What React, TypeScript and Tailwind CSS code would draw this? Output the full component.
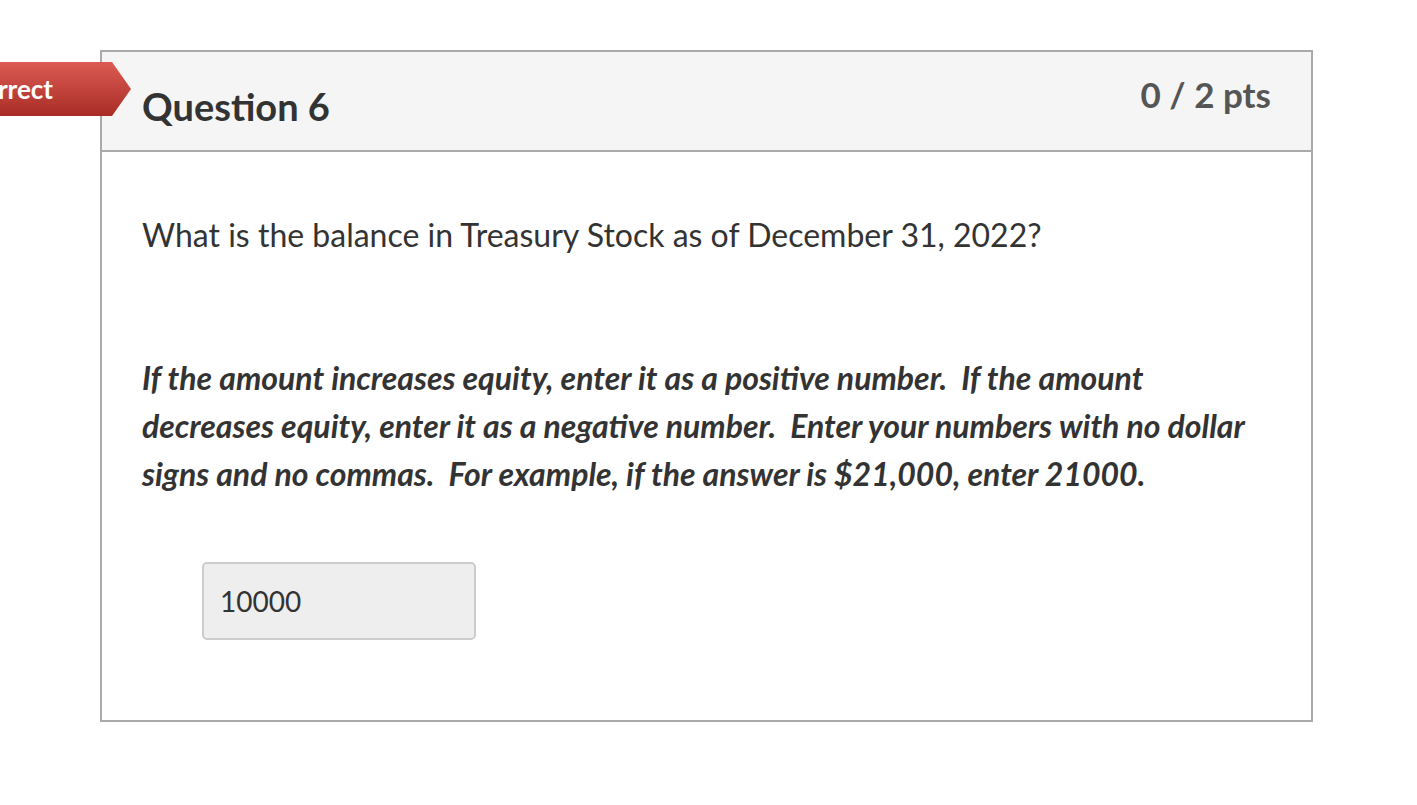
import React from 'react';

const IncorrectBadge: React.FC = () => (
    <div
        className="absolute left-0 top-[62px] flex h-[54px] w-[131px] items-center justify-end overflow-hidden bg-gradient-to-b from-[#dc5b53] to-[#a82c25] pr-[78px] [clip-path:polygon(0_0,112px_0,131px_50%,112px_100%,0_100%)]"
    >
        <span className="whitespace-nowrap text-[26px] font-bold leading-none text-white">Incorrect</span>
    </div>
);

const App: React.FC = () => {
    return (
        <div className="relative min-h-[805px] bg-white pl-[100px] pt-[50px] font-['Lato','Liberation_Sans',sans-serif] text-[#333333]">
            <div className="w-[1213px] border-2 border-[#aaaaaa]">
                <div className="flex h-[100px] items-start justify-between border-b-2 border-[#aaaaaa] bg-[#f5f5f5] pl-10 pr-10">
                    <h2 className="pt-[35px] text-[38px] font-bold leading-none text-[#333333]">Question 6</h2>
                    <div className="pt-[25px] text-[35px] font-bold leading-none text-[#555555]">0 / 2 pts</div>
                </div>
                <div className="px-10 pb-[80px] pt-[59px]">
                    <p className="text-[32px] leading-[48px]">What is the balance in Treasury Stock as of December 31, 2022?</p>
                    <p className="mt-[95px] text-[32px] font-bold italic leading-[48px]">
                        If the amount increases equity, enter it as a positive number.{'\u00a0'} If the amount decreases equity, enter it as a negative number.{'\u00a0'} Enter your numbers with no dollar signs and no commas.{'\u00a0'} For example, if the answer is $21,000, enter 21000.
                    </p>
                    <div className="ml-[60px] mt-[64px] flex h-[78px] w-[274px] items-center rounded-[5px] border-2 border-[#cccccc] bg-[#eeeeee] pl-[16px] text-[28px] text-[#333333]">
                        10000
                    </div>
                </div>
            </div>
            <IncorrectBadge />
        </div>
    );
};

export default App;
